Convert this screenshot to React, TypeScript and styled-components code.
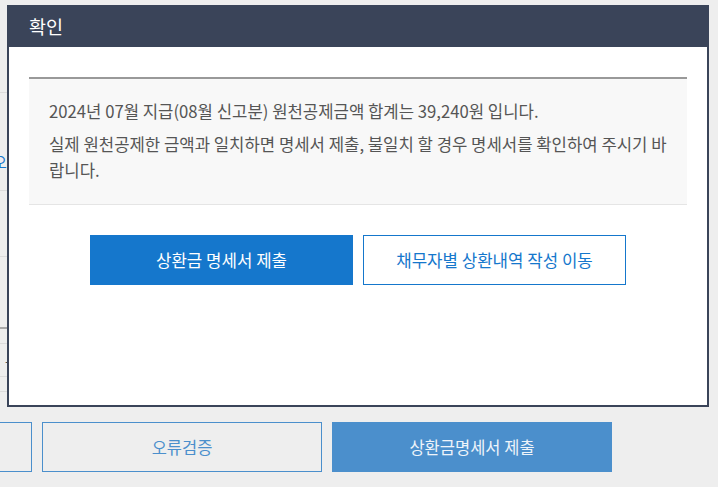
import styled, { createGlobalStyle } from "styled-components";

const GlobalStyle = createGlobalStyle`
  html, body {
    margin: 0;
    padding: 0;
    background: #eeeeee;
    overflow: hidden;
  }
  body {
    font-family: "Noto Sans CJK KR", "Noto Sans", sans-serif;
  }
  * { box-sizing: border-box; }
`;

const Page = styled.div`
  position: relative;
  width: 718px;
  height: 487px;
  overflow: hidden;
`;

// page behind the dialog, scrolled to the right so only its edge shows
const Sheet = styled.div`
  margin-left: -248px;
  width: 860px;
`;

const Row = styled.div<{ $h: number; $strong?: boolean }>`
  height: ${p => p.$h}px;
  border-bottom: ${p => (p.$strong ? "2px solid #a9a9a9" : "1px solid #dcdcdc")};
  display: flex;
  align-items: center;
`;

const RowLink = styled.span`
  margin: 40px 0 0 241px;
  color: #1577cc;
  font-size: 15px;
`;

const RowNote = styled.span`
  margin-left: 253px;
  color: #555555;
  font-size: 14px;
  line-height: 1;
`;

const BottomBar = styled.div`
  display: flex;
  gap: 10px;
  margin-top: 30px;
`;

const PageButton = styled.button<{ $filled?: boolean }>`
  width: 280px;
  height: 50px;
  border: 1px solid #4b8fcc;
  background: ${p => (p.$filled ? "#4b8fcc" : "#eeeeee")};
  color: ${p => (p.$filled ? "#eef4fa" : "#4b8fcc")};
  font-family: inherit;
  font-size: 16.5px;
  padding: 0;
`;

const Modal = styled.div`
  position: absolute;
  left: 7px;
  top: 5px;
  width: 702px;
  height: 402px;
  display: flex;
  flex-direction: column;
`;

const ModalHeader = styled.div`
  height: 42px;
  background: #3a4459;
  color: #ffffff;
  font-size: 18.5px;
  display: flex;
  align-items: center;
  padding-left: 22px;
`;

const ModalBody = styled.div`
  flex: 1;
  background: #ffffff;
  border: 2px solid #3a4459;
  border-top: none;
  padding: 30px 20px 0;
`;

const InfoBox = styled.div`
  background: #f8f8f8;
  border-top: 2px solid #999999;
  border-bottom: 1px solid #e5e5e5;
  padding: 19px 20px 21px;
  color: #555555;
  font-size: 16.7px;
  line-height: 26px;
`;

const Message = styled.p`
  margin: 0;
  & + & {
    margin-top: 7px;
  }
`;

const Actions = styled.div`
  display: flex;
  justify-content: center;
  gap: 10px;
  margin-top: 30px;
`;

const ActionButton = styled.button<{ $primary?: boolean }>`
  width: 263px;
  height: 50px;
  border: 1px solid #1577cc;
  background: ${p => (p.$primary ? "#1577cc" : "#ffffff")};
  color: ${p => (p.$primary ? "#ffffff" : "#1577cc")};
  font-family: inherit;
  font-size: 16.8px;
  padding: 0;
  cursor: pointer;
`;

export default function App() {
  return (
    <Page>
      <GlobalStyle />
      <Sheet>
        <Row $h={93} />
        <Row $h={98}>
          <RowLink>오류</RowLink>
        </Row>
        <Row $h={66} />
        <Row $h={72} $strong />
        <Row $h={15} />
        <Row $h={33}>
          <RowNote>-</RowNote>
        </Row>
        <Row $h={15} />
        <BottomBar>
          <PageButton>이전</PageButton>
          <PageButton>오류검증</PageButton>
          <PageButton $filled>상환금명세서 제출</PageButton>
        </BottomBar>
      </Sheet>

      <Modal>
        <ModalHeader>확인</ModalHeader>
        <ModalBody>
          <InfoBox>
            <Message>2024년 07월 지급(08월 신고분) 원천공제금액 합계는 39,240원 입니다.</Message>
            <Message>
              실제 원천공제한 금액과 일치하면 명세서 제출, 불일치 할 경우 명세서를 확인하여 주시기 바랍니다.
            </Message>
          </InfoBox>
          <Actions>
            <ActionButton $primary>상환금 명세서 제출</ActionButton>
            <ActionButton>채무자별 상환내역 작성 이동</ActionButton>
          </Actions>
        </ModalBody>
      </Modal>
    </Page>
  );
}
